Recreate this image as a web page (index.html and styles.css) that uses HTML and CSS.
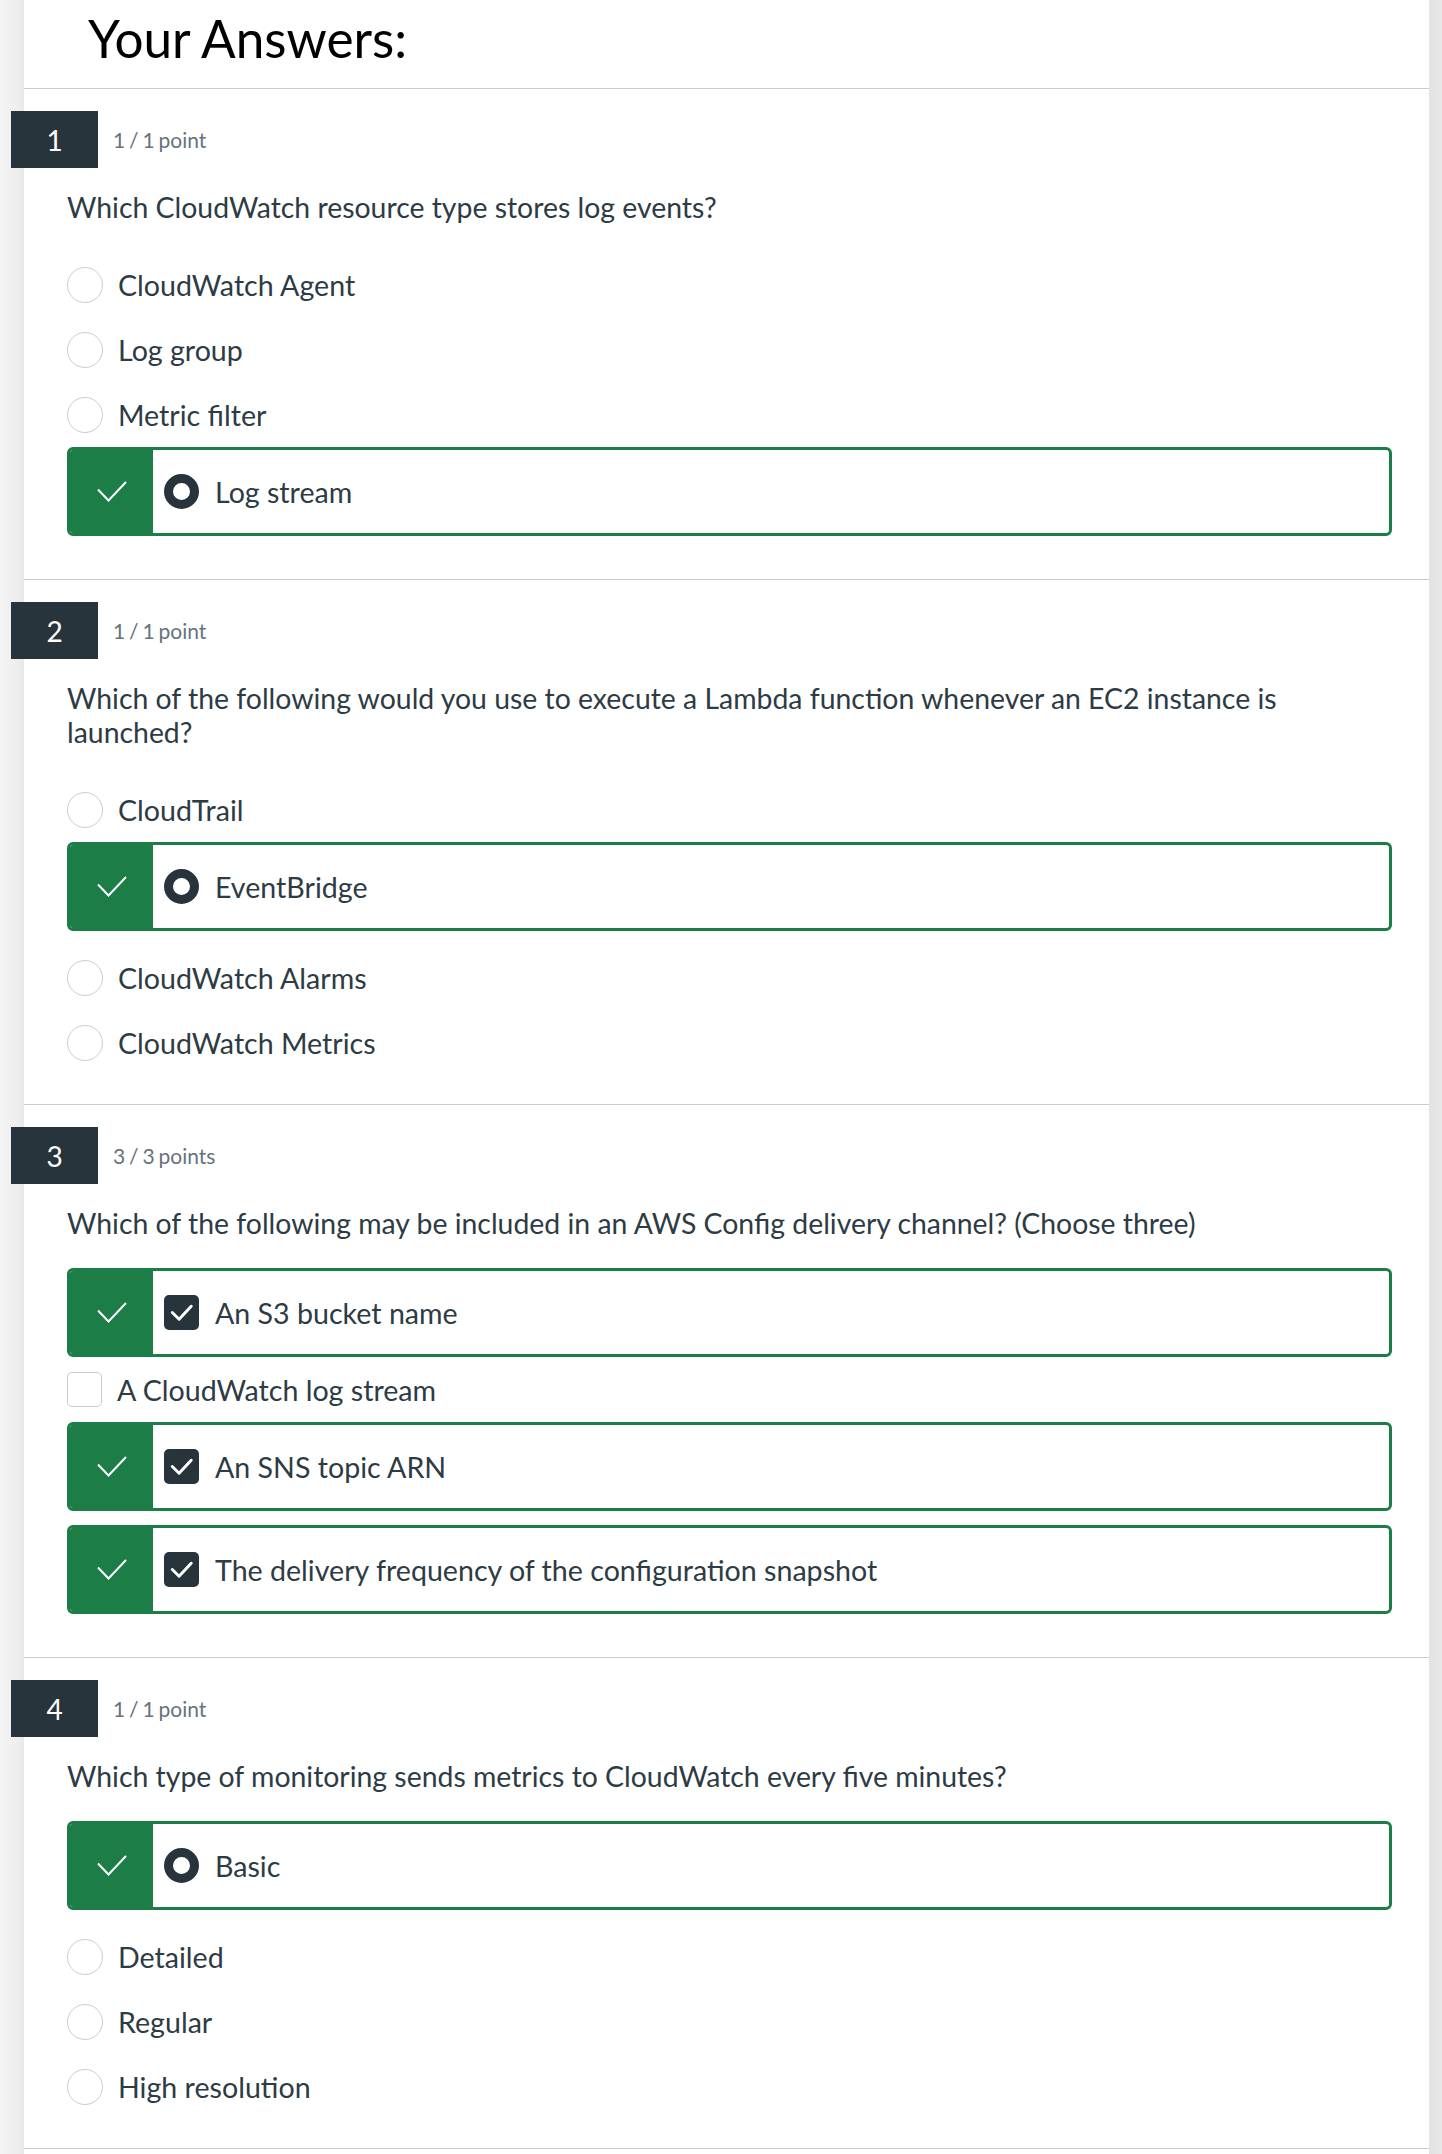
FILE: index.html
```html
<!DOCTYPE html>
<html lang="en">
<head>
<meta charset="utf-8">
<title>Your Answers</title>
<link rel="stylesheet" href="styles.css">
</head>
<body>
<div class="page">
  <div class="gutter-left"></div>
  <main class="sheet">
    <header class="title-bar"><h1>Your Answers:</h1></header>

    <section class="question">
      <div class="q-head"><div class="q-num">1</div><div class="q-points">1 / 1 point</div></div>
      <p class="q-text">Which CloudWatch resource type stores log events?</p>
      <div class="answers">
        <div class="answer radio-row"><span class="radio"></span><span class="label">CloudWatch Agent</span></div>
        <div class="answer radio-row"><span class="radio"></span><span class="label">Log group</span></div>
        <div class="answer radio-row"><span class="radio"></span><span class="label">Metric filter</span></div>
        <div class="answer correct">
          <div class="flag"><svg class="flag-check" viewBox="0 0 30 21" width="30" height="21"><polyline points="1,8.5 11.5,19.5 29,1"/></svg></div>
          <div class="answer-body"><span class="radio selected"></span><span class="label">Log stream</span></div>
        </div>
      </div>
    </section>

    <section class="question">
      <div class="q-head"><div class="q-num">2</div><div class="q-points">1 / 1 point</div></div>
      <p class="q-text">Which of the following would you use to execute a Lambda function whenever an EC2 instance is launched?</p>
      <div class="answers">
        <div class="answer radio-row"><span class="radio"></span><span class="label">CloudTrail</span></div>
        <div class="answer correct">
          <div class="flag"><svg class="flag-check" viewBox="0 0 30 21" width="30" height="21"><polyline points="1,8.5 11.5,19.5 29,1"/></svg></div>
          <div class="answer-body"><span class="radio selected"></span><span class="label">EventBridge</span></div>
        </div>
        <div class="answer radio-row"><span class="radio"></span><span class="label">CloudWatch Alarms</span></div>
        <div class="answer radio-row"><span class="radio"></span><span class="label">CloudWatch Metrics</span></div>
      </div>
    </section>

    <section class="question">
      <div class="q-head"><div class="q-num">3</div><div class="q-points">3 / 3 points</div></div>
      <p class="q-text">Which of the following may be included in an AWS Config delivery channel? (Choose three)</p>
      <div class="answers">
        <div class="answer correct">
          <div class="flag"><svg class="flag-check" viewBox="0 0 30 21" width="30" height="21"><polyline points="1,8.5 11.5,19.5 29,1"/></svg></div>
          <div class="answer-body"><span class="checkbox checked"><svg viewBox="0 0 36 36" width="36" height="36"><polyline points="8.5,18 15.5,25 28,11.5"/></svg></span><span class="label">An S3 bucket name</span></div>
        </div>
        <div class="answer check-row"><span class="checkbox"></span><span class="label">A CloudWatch log stream</span></div>
        <div class="answer correct">
          <div class="flag"><svg class="flag-check" viewBox="0 0 30 21" width="30" height="21"><polyline points="1,8.5 11.5,19.5 29,1"/></svg></div>
          <div class="answer-body"><span class="checkbox checked"><svg viewBox="0 0 36 36" width="36" height="36"><polyline points="8.5,18 15.5,25 28,11.5"/></svg></span><span class="label">An SNS topic ARN</span></div>
        </div>
        <div class="answer correct">
          <div class="flag"><svg class="flag-check" viewBox="0 0 30 21" width="30" height="21"><polyline points="1,8.5 11.5,19.5 29,1"/></svg></div>
          <div class="answer-body"><span class="checkbox checked"><svg viewBox="0 0 36 36" width="36" height="36"><polyline points="8.5,18 15.5,25 28,11.5"/></svg></span><span class="label">The delivery frequency of the configuration snapshot</span></div>
        </div>
      </div>
    </section>

    <section class="question">
      <div class="q-head"><div class="q-num">4</div><div class="q-points">1 / 1 point</div></div>
      <p class="q-text">Which type of monitoring sends metrics to CloudWatch every five minutes?</p>
      <div class="answers">
        <div class="answer correct">
          <div class="flag"><svg class="flag-check" viewBox="0 0 30 21" width="30" height="21"><polyline points="1,8.5 11.5,19.5 29,1"/></svg></div>
          <div class="answer-body"><span class="radio selected"></span><span class="label">Basic</span></div>
        </div>
        <div class="answer radio-row"><span class="radio"></span><span class="label">Detailed</span></div>
        <div class="answer radio-row"><span class="radio"></span><span class="label">Regular</span></div>
        <div class="answer radio-row"><span class="radio"></span><span class="label">High resolution</span></div>
      </div>
    </section>
    <div class="sheet-foot"></div>
  </main>
  <div class="gutter-right"></div>
</div>
</body>
</html>
```

FILE: styles.css
```css
* { box-sizing: border-box; }

html, body {
  margin: 0;
  padding: 0;
}

body {
  font-family: Lato, "Open Sans", "Liberation Sans", sans-serif;
  color: #2d3b45;
  background: #efefef;
}

.page {
  display: flex;
  min-height: 2154px;
}

.gutter-left {
  width: 24px;
  flex: none;
  background: linear-gradient(to right, #f4f4f4, #eeeeee 70%, #e9e9e9);
}

.gutter-right {
  width: 13px;
  flex: none;
  background: linear-gradient(to right, #e3e3e3, #e8e8e8);
}

.sheet {
  flex: 1;
  min-width: 0;
  background: #ffffff;
}

.title-bar {
  padding: 7px 0 19px 64px;
  border-bottom: 1px solid #cccccc;
}

.title-bar h1 {
  margin: 0;
  font-size: 51.3px;
  font-weight: 400;
  line-height: 62px;
  color: #000000;
}

.question {
  padding: 22px 37px 43px 43px;
  border-bottom: 1px solid #c7cdd1;
}

.q-head {
  display: flex;
  align-items: center;
}

.q-num {
  width: 87px;
  height: 57px;
  margin-left: -56px;
  background: #28343c;
  color: #ffffff;
  font-size: 28px;
  display: flex;
  align-items: center;
  justify-content: center;
}

.q-points {
  margin-left: 15px;
  font-size: 21px;
  word-spacing: -1.5px;
  color: #66737d;
}

.q-text {
  margin: 22px 0 0 0;
  padding-right: 20px;
  font-size: 28.4px;
  line-height: 34px;
}

.answers {
  margin-top: 28px;
  display: flex;
  flex-direction: column;
  gap: 14px;
}

.answer {
  display: flex;
  align-items: center;
  font-size: 28.6px;
  line-height: 34px;
}

.radio-row {
  margin-top: 15px;
  height: 36px;
}

.check-row {
  height: 37px;
}

.radio {
  width: 36px;
  height: 36px;
  flex: none;
  border-radius: 50%;
  border: 1px solid #c7cdd1;
  background: #ffffff;
  margin-right: 15px;
}

.radio.selected {
  width: 35px;
  height: 35px;
  border: 9px solid #28343c;
  margin-right: 16px;
}

.checkbox {
  width: 35px;
  height: 35px;
  flex: none;
  border-radius: 5px;
  border: 1px solid #c7cdd1;
  background: #ffffff;
  margin-right: 15px;
}

.checkbox.checked {
  border: none;
  background: #28343c;
  margin-right: 16px;
  display: flex;
  align-items: center;
  justify-content: center;
}

.checkbox.checked svg {
  display: block;
  width: 35px;
  height: 35px;
}

.checkbox.checked polyline {
  fill: none;
  stroke: #ffffff;
  stroke-width: 3;
  stroke-linejoin: round;
  stroke-linecap: round;
}

.answer.correct {
  height: 89px;
  border: 3px solid #1c7d46;
  border-radius: 6px;
  overflow: hidden;
  align-items: stretch;
}

.flag {
  width: 83px;
  flex: none;
  background: #1c7d46;
  display: flex;
  align-items: center;
  justify-content: center;
}

.flag-check {
  display: block;
}

.flag-check polyline {
  fill: none;
  stroke: #ffffff;
  stroke-width: 2;
}

.answer-body {
  flex: 1;
  display: flex;
  align-items: center;
  padding-left: 11px;
}

.sheet-foot {
  height: 40px;
}
```
